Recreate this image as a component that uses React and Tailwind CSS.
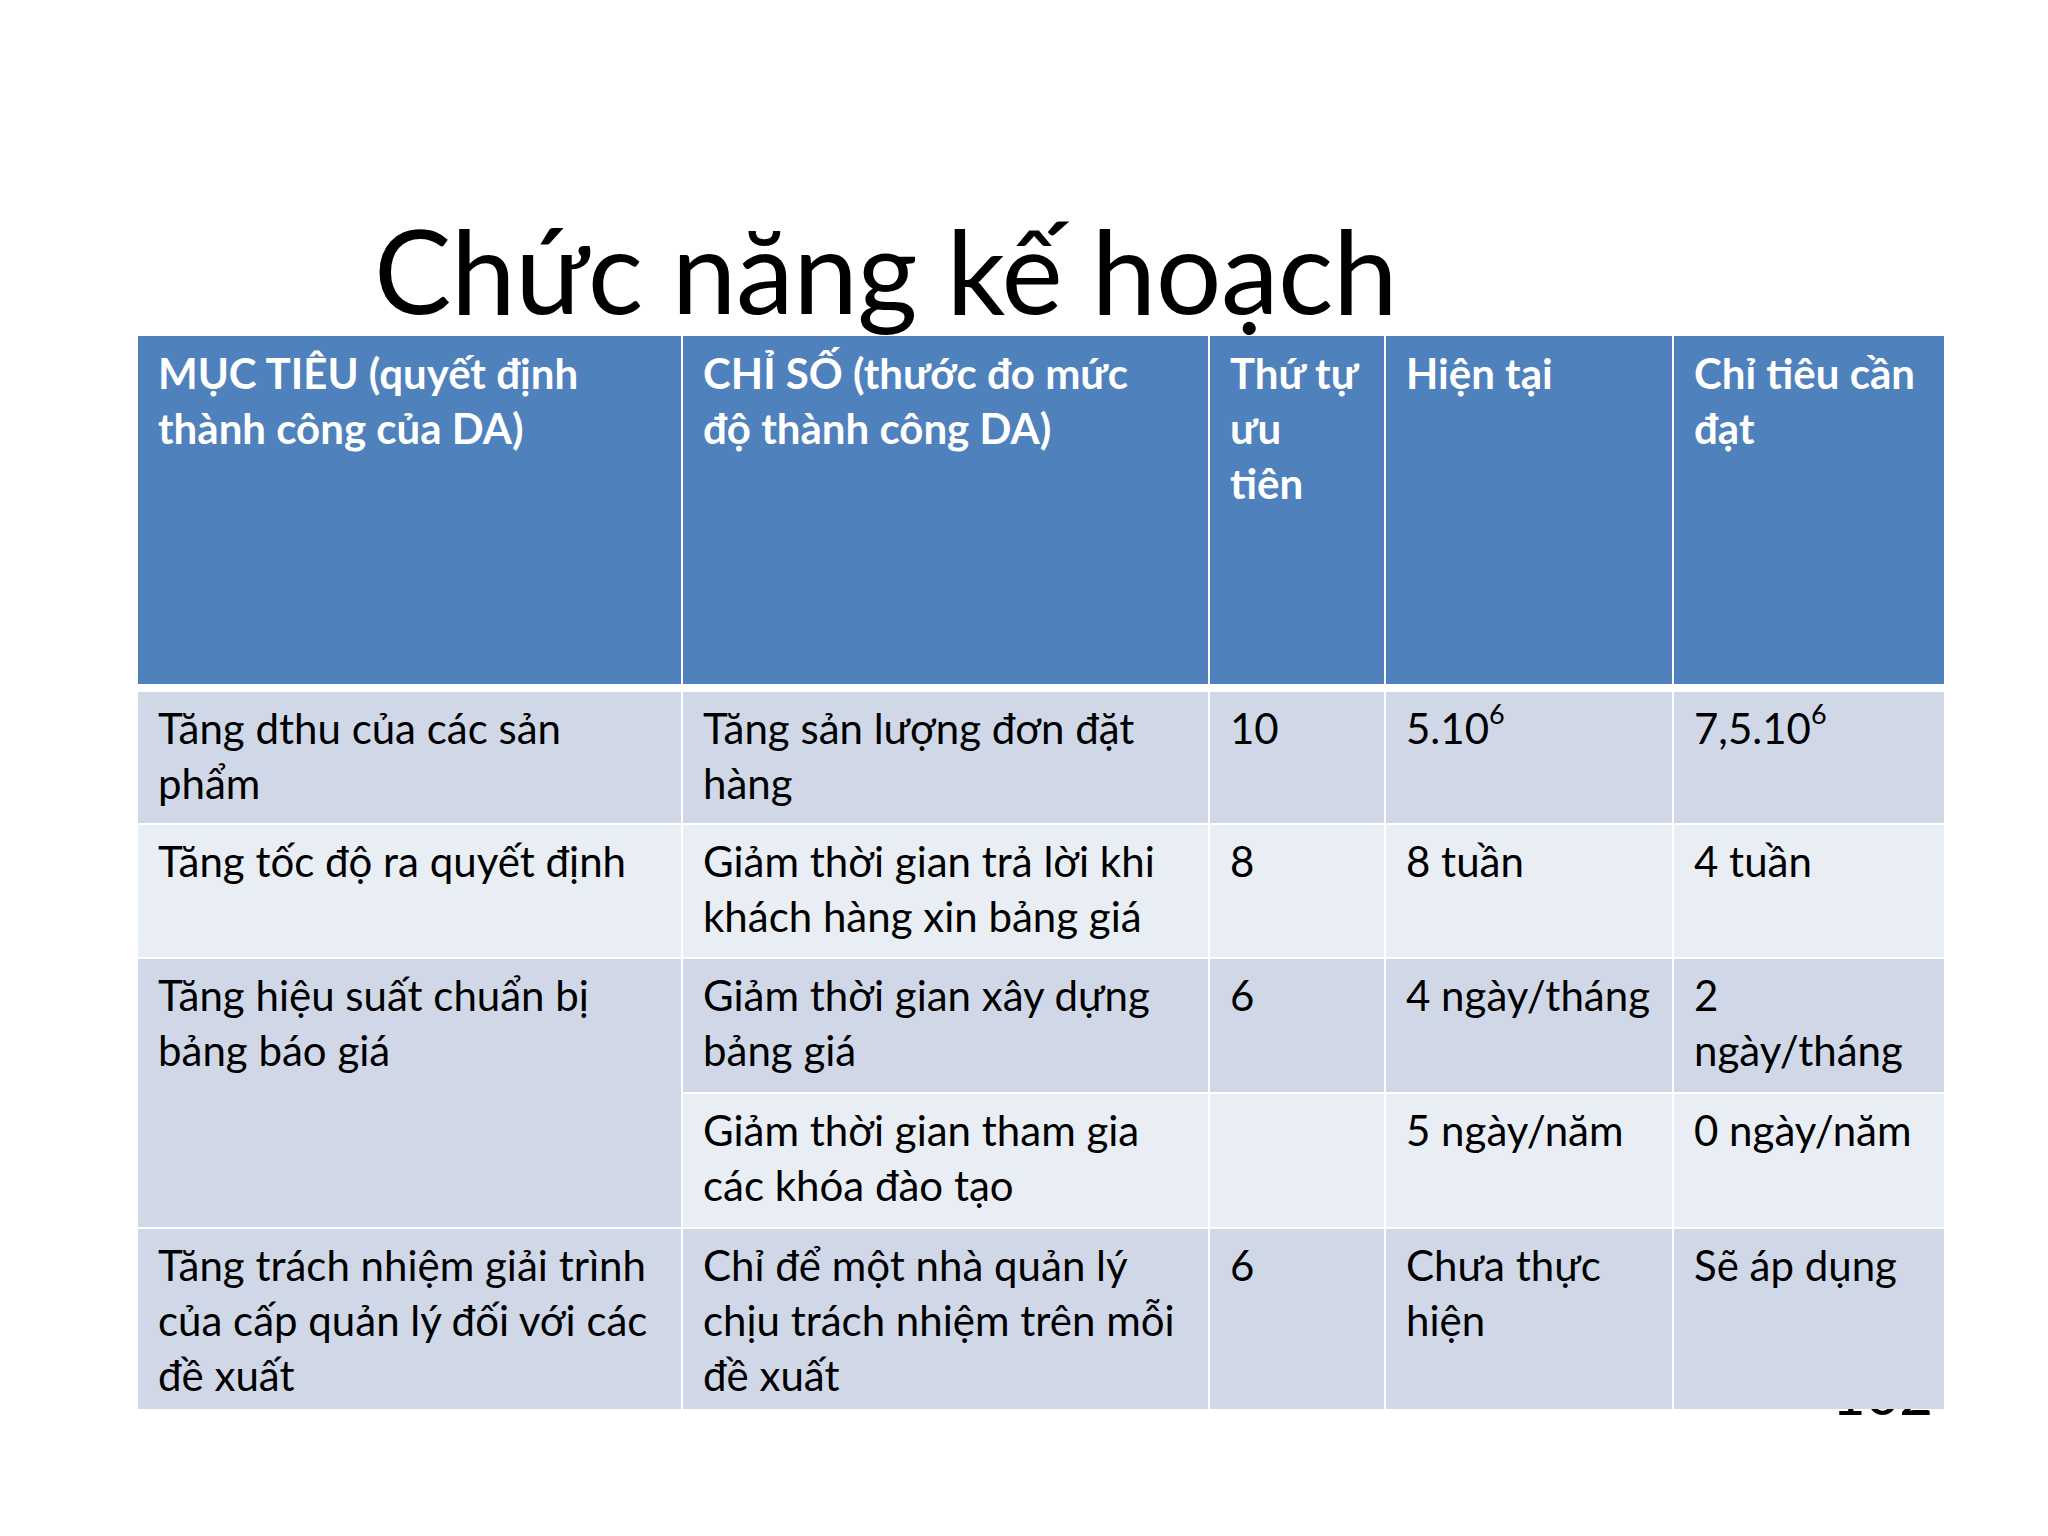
const headers = [
  ["MỤC TIÊU (quyết định", "thành công của DA)"],
  ["CHỈ SỐ (thước đo mức", "độ thành công DA)"],
  ["Thứ tự", "ưu", "tiên"],
  ["Hiện tại"],
  ["Chỉ tiêu cần", "đạt"],
];

const dark = "bg-[#d0d8e8]";
const light = "bg-[#e9edf4]";

const Cell = ({ lines, className = "" }) => (
  <div className={`px-5 pt-[9px] whitespace-nowrap ${className}`}>
    {lines.map((l, i) => (
      <div key={i}>{l}</div>
    ))}
  </div>
);

const Pow = ({ base }) => (
  <span>
    {base}
    <sup className="text-[27px] top-[-0.75em]">6</sup>
  </span>
);

export default function App() {
  return (
    <div className="relative w-[2048px] h-[1536px] bg-white font-['Lato',sans-serif] text-black overflow-hidden">
      <div className="h-[336px] flex items-end pl-[374px] pb-[8px]">
        <h1 className="text-[116px] leading-none tracking-[-0.5px]">Chức năng kế hoạch</h1>
      </div>

      {/* slide number, mostly hidden under the table */}
      <div className="absolute left-[1832px] top-[1364px] text-[58px] leading-none">102</div>

      <div className="relative z-10 ml-[138px] w-[1806px] text-[42px] leading-[55px]">
        <div className="grid grid-cols-[543px_525px_174px_286px_270px] gap-x-[2px] h-[348px] text-white font-bold">
          {headers.map((h, i) => (
            <div key={i} className="bg-[#4f81bd] px-5 pt-[10px] whitespace-nowrap">
              {h.map((l, j) => (
                <div key={j}>{l}</div>
              ))}
            </div>
          ))}
        </div>

        <div className="mt-[8px] grid grid-cols-[543px_525px_174px_286px_270px] grid-rows-[131px_132px_133px_133px_180px] gap-[2px]">
          <Cell className={`${dark} pt-[8px]`} lines={["Tăng dthu của các sản", "phẩm"]} />
          <Cell className={`${dark} pt-[8px]`} lines={["Tăng sản lượng đơn đặt", "hàng"]} />
          <Cell className={`${dark} pt-[8px]`} lines={["10"]} />
          <Cell className={`${dark} pt-[8px]`} lines={[<Pow key="a" base="5.10" />]} />
          <Cell className={`${dark} pt-[8px]`} lines={[<Pow key="b" base="7,5.10" />]} />

          <Cell className={light} lines={["Tăng tốc độ ra quyết định"]} />
          <Cell className={light} lines={["Giảm thời gian trả lời khi", "khách hàng xin bảng giá"]} />
          <Cell className={light} lines={["8"]} />
          <Cell className={light} lines={["8 tuần"]} />
          <Cell className={light} lines={["4 tuần"]} />

          <Cell className={`${dark} row-span-2`} lines={["Tăng hiệu suất chuẩn bị", "bảng báo giá"]} />
          <Cell className={dark} lines={["Giảm thời gian xây dựng", "bảng giá"]} />
          <Cell className={dark} lines={["6"]} />
          <Cell className={dark} lines={["4 ngày/tháng"]} />
          <Cell className={dark} lines={["2", "ngày/tháng"]} />

          <Cell className={light} lines={["Giảm thời gian tham gia", "các khóa đào tạo"]} />
          <Cell className={light} lines={[]} />
          <Cell className={light} lines={["5 ngày/năm"]} />
          <Cell className={light} lines={["0 ngày/năm"]} />

          <Cell className={dark} lines={["Tăng trách nhiệm giải trình", "của cấp quản lý đối với các", "đề xuất"]} />
          <Cell className={dark} lines={["Chỉ để một nhà quản lý", "chịu trách nhiệm trên mỗi", "đề xuất"]} />
          <Cell className={dark} lines={["6"]} />
          <Cell className={dark} lines={["Chưa thực", "hiện"]} />
          <Cell className={dark} lines={["Sẽ áp dụng"]} />
        </div>
      </div>
    </div>
  );
}
